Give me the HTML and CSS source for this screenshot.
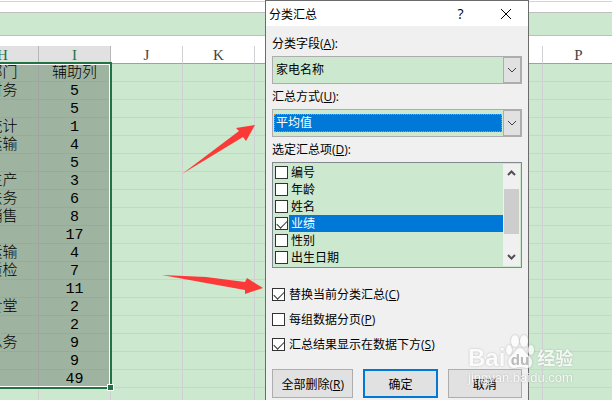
FILE: index.html
```html
<!DOCTYPE html>
<html lang="zh-CN">
<head>
    <meta charset="UTF-8">
    <meta name="viewport" content="width=device-width, initial-scale=1.0">
    <title>分类汇总</title>
    <link rel="stylesheet" href="styles.css">
</head>
<body>
    <div class="ribbon-edge"></div>
    <div class="formula-bar"></div>

    <main class="sheet">
        <table class="grid">
            <thead>
                <tr id="columns"></tr>
            </thead>
            <tbody id="rows"></tbody>
        </table>
        <div class="selection"><span class="fill-handle"></span></div>
    </main>

    <svg class="arrows" width="270" height="400" viewBox="0 0 270 400" aria-hidden="true">
        <path d="M182 174 L239 131 L236 128 L255 125 L246 141 L243 137 Z"/>
        <path d="M162 275 L206 277 L245 282 L247 278 L263 288 L245 294 L245 290 L206 283 Z"/>
    </svg>

    <form class="dialog" role="dialog" aria-labelledby="dialog-title">
        <header class="title-bar">
            <h1 id="dialog-title">分类汇总</h1>
            <button type="button" class="title-button" aria-label="帮助">?</button>
            <button type="button" class="title-button" aria-label="关闭">
                <svg width="12" height="12" viewBox="0 0 12 12"><path d="M1 1 L11 11 M11 1 L1 11"/></svg>
            </button>
        </header>
        <div class="dialog-body">
            <label class="field-label" for="field">分类字段(<u>A</u>):</label>
            <div class="combo">
                <select id="field">
                    <option>家电名称</option>
                </select>
                <span class="combo-arrow"><svg width="10" height="6" viewBox="0 0 10 6"><path d="M1 1 L5 5 L9 1"/></svg></span>
            </div>

            <label class="field-label" for="method">汇总方式(<u>U</u>):</label>
            <div class="combo">
                <select id="method" class="focused">
                    <option>平均值</option>
                </select>
                <span class="combo-arrow"><svg width="10" height="6" viewBox="0 0 10 6"><path d="M1 1 L5 5 L9 1"/></svg></span>
            </div>

            <span class="field-label" id="items-label">选定汇总项(<u>D</u>):</span>
            <div class="listbox" role="group" aria-labelledby="items-label">
                <div class="items">
                    <label class="item"><input type="checkbox"><span>编号</span></label>
                    <label class="item"><input type="checkbox"><span>年龄</span></label>
                    <label class="item"><input type="checkbox"><span>姓名</span></label>
                    <label class="item current"><input type="checkbox" checked><span>业绩</span></label>
                    <label class="item"><input type="checkbox"><span>性别</span></label>
                    <label class="item"><input type="checkbox"><span>出生日期</span></label>
                </div>
                <div class="scrollbar">
                    <svg width="9" height="6" viewBox="0 0 9 6"><path d="M1 5 L4.500 1.500 L8 5"/></svg>
                    <div class="thumb"></div>
                    <svg width="9" height="6" viewBox="0 0 9 6"><path d="M1 1 L4.500 4.500 L8 1"/></svg>
                </div>
            </div>

            <div class="options">
                <label><input type="checkbox" checked><span>替换当前分类汇总(<u>C</u>)</span></label>
                <label><input type="checkbox"><span>每组数据分页(<u>P</u>)</span></label>
                <label><input type="checkbox" checked><span>汇总结果显示在数据下方(<u>S</u>)</span></label>
            </div>

            <div class="actions">
                <button type="button">全部删除(<u>R</u>)</button>
                <button type="submit" class="default">确定</button>
                <button type="button">取消</button>
            </div>
        </div>
    </form>

    <div class="watermark">
        <div class="brand">
            <span class="brand-latin">Bai</span>
            <svg width="30" height="36" viewBox="0 0 30 36">
                <ellipse cx="4" cy="16" rx="3" ry="5"/>
                <ellipse cx="10" cy="7" rx="4" ry="6"/>
                <ellipse cx="19" cy="7" rx="4" ry="6"/>
                <ellipse cx="26" cy="16" rx="3" ry="5"/>
                <path d="M15 14 C11 14 10 19 6 22 C1 26 3 34 9 34 C12 34 13 33 15 33 C17 33 19 34 22 34 C28 34 29 26 24 22 C20 19 19 14 15 14 Z"/>
                <text x="15" y="31" text-anchor="middle">du</text>
            </svg>
            <span class="brand-cn">经验</span>
        </div>
        <div class="site">jingyan.baidu.com</div>
    </div>

    <script>
        const columns = ["H", "I", "J", "K", "L", "M", "N", "O", "P"];
        const data = [
            ["部门", "辅助列"], ["财务", 5], ["", 5], ["统计", 1], ["运输", 4], ["", 5],
            ["生产", 3], ["法务", 6], ["销售", 8], ["", 17], ["运输", 4], ["质检", 7],
            ["", 11], ["食堂", 2], ["", 2], ["总务", 9], ["", 9], ["", 49], []
        ];

        document.getElementById("columns").innerHTML = columns
            .map((name, i) => `<th${i < 2 ? ' class="selected"' : ""}>${name}</th>`)
            .join("");
        document.getElementById("rows").innerHTML = data
            .map(row => "<tr>" + columns
                .map((name, i) => `<td${i < row.length ? ' class="selected"' : ""}>${row[i] ?? ""}</td>`)
                .join("") + "</tr>")
            .join("");
    </script>
</body>
</html>
```
FILE: styles.css
```css
* {
    box-sizing: border-box;
}
html, body {
    height: 100%;
    margin: 0;
}
body {
    position: relative;
    overflow: hidden;
    background-color: #ffffff;
    color: #000000;
    font-family: "Open Sans", "Noto Sans CJK SC", sans-serif;
    font-size: 12px;
}

/* worksheet */
.ribbon-edge {
    height: 12px;
    border-top: 1px solid #ffffff;
    box-shadow: inset 0 1px 0 #d4d4d4;
}
.formula-bar {
    height: 24px;
    margin-bottom: 10px;
    background-color: #cce8cf;
    border-top: 1px solid #bfbfbf;
    border-bottom: 1px solid #bfbfbf;
}
.sheet {
    position: relative;
    margin-left: -33px;
}
.grid {
    width: 648px;
    table-layout: fixed;
    border-collapse: separate;
    border-spacing: 0;
    font-family: "Liberation Mono", "Noto Sans CJK SC", monospace;
    font-size: 15px;
}
.grid th,
.grid td {
    height: 18px;
    padding: 0;
    border-right: 1px solid #d0d0d4;
    border-bottom: 1px solid #d0d0d4;
    text-align: center;
    font-weight: 300;
    white-space: nowrap;
}
.grid th {
    padding-top: 2px;
    border-bottom-color: #a0a0a0;
    color: #444444;
    font-family: "Liberation Serif", serif;
    font-weight: normal;
    line-height: 15px;
}
.grid th.selected {
    background-color: #e1e1e1;
    border-right-color: #b8b8b8;
    color: #217346;
}
.grid td {
    padding-top: 3px;
    background-color: #cce8cf;
    line-height: 14px;
}
.grid td.selected {
    background-color: #9fb4a0;
    border-color: #a3a3a3;
}
.selection {
    position: absolute;
    top: 16px;
    left: 0;
    width: 145px;
    height: 327px;
    border: 2px solid #217346;
    box-shadow: inset 0 0 0 1px #ffffff;
}
.fill-handle {
    position: absolute;
    right: -4px;
    bottom: -4px;
    width: 7px;
    height: 7px;
    background-color: #217346;
    border: 1px solid #ffffff;
}
.arrows {
    position: absolute;
    top: 0;
    left: 0;
    fill: #fb3a38;
}

/* dialog */
.dialog {
    position: absolute;
    top: 0;
    left: 265px;
    width: 264px;
    background-color: #f0f0f0;
    border: 1px solid #6b6b6b;
}
.dialog input,
.dialog select,
.dialog button {
    margin: 0;
    font: inherit;
    color: inherit;
}
.title-bar {
    display: flex;
    align-items: center;
    height: 25px;
    padding-left: 3px;
    background-color: #ffffff;
}
.title-bar h1 {
    flex: 1;
    margin: 0;
    font-size: 12px;
    font-weight: normal;
}
.title-button {
    width: 45px;
    height: 25px;
    padding: 0;
    background: none;
    border: none;
}
.title-bar .title-button {
    font-size: 14px;
}
.title-button svg {
    display: block;
    margin: auto;
}
.dialog svg {
    fill: none;
    stroke: #000000;
}
.dialog-body {
    padding: 5px 6px;
}
.field-label {
    display: block;
    height: 25px;
    line-height: 26px;
}
.combo {
    display: flex;
    height: 28px;
    background-color: #cce8cf;
    border: 1px solid #adadad;
}
.combo select {
    flex: 1;
    min-width: 0;
    height: 18px;
    margin: 4px 1px;
    padding: 0 2px;
    appearance: none;
    background: transparent;
    border: none;
    border-radius: 0;
    outline: none;
    line-height: 18px;
}
.combo select.focused {
    background-color: #0078d7;
    color: #ffffff;
    outline: 1px dotted #e08a30;
    outline-offset: -1px;
}
.combo-arrow {
    display: flex;
    align-items: center;
    justify-content: center;
    width: 18px;
    background-color: #e1e1e1;
    border: 1px solid #adadad;
}
.combo-arrow svg {
    stroke: #404040;
}
.listbox {
    display: flex;
    height: 106px;
    padding: 1px;
    background-color: #cce8cf;
    border: 1px solid #828790;
}
.items {
    flex: 1;
}
.item {
    display: flex;
    align-items: center;
    gap: 1px;
    height: 17px;
    padding-left: 1px;
}
.item span {
    flex: 1;
    padding-left: 2px;
    line-height: 17px;
}
.item.current span {
    background-color: #0078d7;
    color: #ffffff;
}
.dialog input[type="checkbox"] {
    width: 13px;
    height: 13px;
    appearance: none;
    background-color: #ffffff;
    border: 1px solid #333333;
}
.dialog input[type="checkbox"]:checked::before {
    content: "";
    display: block;
    width: 9px;
    height: 5px;
    margin: 2px 1px;
    border-left: 1px solid #333333;
    border-bottom: 1px solid #333333;
    transform: rotate(-45deg);
}
.scrollbar {
    display: flex;
    flex-direction: column;
    align-items: center;
    width: 17px;
    padding: 6px 1px;
    background-color: #f0f0f0;
}
.dialog .scrollbar svg {
    stroke: #505050;
    stroke-width: 2;
}
.thumb {
    width: 15px;
    height: 45px;
    margin: 13px 0 auto;
    background-color: #cdcdcd;
}
.options {
    display: grid;
    gap: 7px;
    padding: 17px 0 16px;
}
.options label {
    display: flex;
    align-items: center;
    gap: 4px;
    height: 18px;
}
.actions {
    display: grid;
    grid-template-columns: 81fr 74fr 74fr;
    gap: 10px;
}
.dialog .actions button {
    height: 29px;
    padding: 0;
    background-color: #e1e1e1;
    border: 1px solid #adadad;
}
.dialog .actions .default {
    border: 2px solid #0078d7;
}

/* watermark */
.watermark {
    position: absolute;
    right: 34px;
    bottom: 14px;
    width: 110px;
    color: #ffffff;
    opacity: 0.75;
    text-shadow: 0 0 2px #a0a0a0;
    pointer-events: none;
}
.brand {
    display: flex;
    align-items: flex-end;
    line-height: 24px;
}
.brand-latin {
    font-family: "Liberation Sans", sans-serif;
    font-size: 24px;
    font-weight: bold;
}
.brand svg {
    fill: #ffffff;
    filter: drop-shadow(0 0 1px #a0a0a0);
}
.brand text {
    fill: #a8a8a8;
    font-family: "Liberation Sans", sans-serif;
    font-size: 15px;
    font-weight: bold;
    text-shadow: none;
}
.brand-cn {
    margin-left: 2px;
    font-size: 18px;
    font-weight: bold;
    white-space: nowrap;
}
.site {
    font-family: "Liberation Sans", sans-serif;
    font-size: 13px;
    line-height: 16px;
}
```
